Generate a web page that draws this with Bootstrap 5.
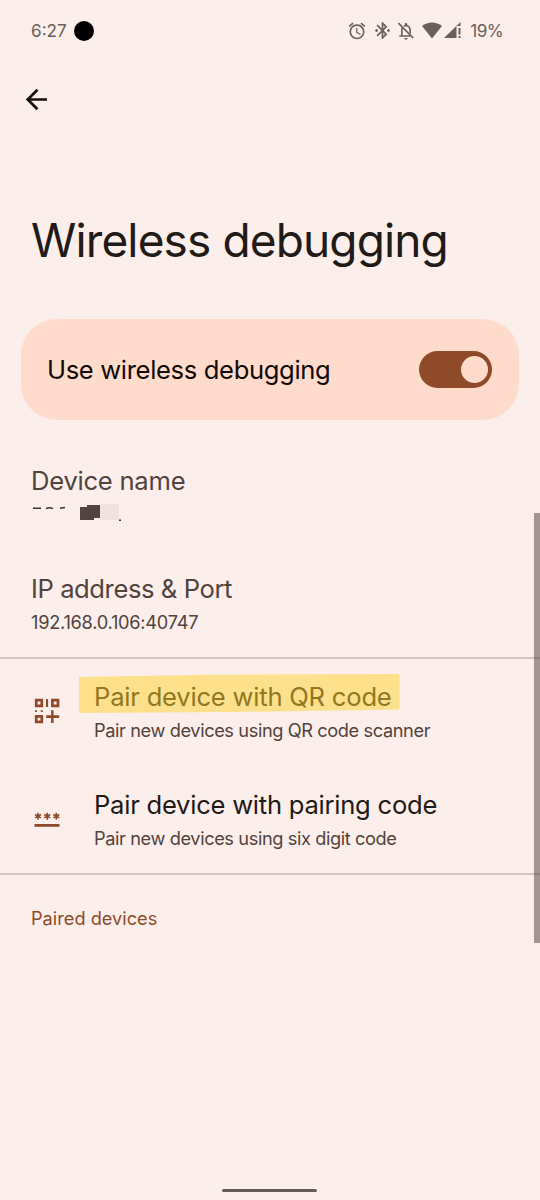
<!DOCTYPE html>
<html lang="en">
<head>
<meta charset="utf-8">
<meta name="viewport" content="width=device-width, initial-scale=1">
<title>Wireless debugging</title>
<link rel="stylesheet" href="https://cdn.jsdelivr.net/npm/bootstrap@5.3.0/dist/css/bootstrap.min.css">
<style>
body{background:#fceeea;font-family:Inter,Roboto,sans-serif;color:#211a17}
.screen{width:540px;height:1200px}
svg{display:block;flex:none}
.status{height:62px;padding:0 37px 0 31px;color:#6a605c;font-size:17.2px}
.cam{width:20px;height:20px;background:#000;margin-left:7px}
.topbar{height:75px;padding:25px 0 0 24px}
.page-title{height:182px;padding:70px 0 0 31px;margin:0;font-size:46px;line-height:66px;font-weight:400;letter-spacing:-.87px}
.main-switch{height:101px;margin:0 21px 21px;padding:0 27px 0 26px;border-radius:36px;background:#ffdbcb;color:#120a06}
.main-switch .t{letter-spacing:-.35px}
.toggle{width:73px;height:37px;background:#8f4b29;padding:0 4.5px}
.knob{width:27px;height:27px;background:#ffdbcb}
.pref{height:108px;padding:22px 30px 0 31px}
.ruled{border-top:2px solid #d2c4c0}
.pref.ruled{padding-top:20px}
.t{font-size:25.6px;line-height:36px;white-space:nowrap;letter-spacing:-.25px}
.addr .t{letter-spacing:-.42px}
.s{font-size:18.2px;line-height:28px;margin-top:1px;white-space:nowrap;color:#51433e;letter-spacing:-.39px}
.addr .s{letter-spacing:-.25px}
.muted{color:#51433e}
.ico{width:32px;margin:18px 32px 0 -1px}
.hl{color:#92781f;letter-spacing:-.22px}
.hl svg{position:absolute;left:-15px;top:-5px}
.hl span{position:relative}
.cat{padding:29px 31px;color:#8f4b29;font-size:18.2px;line-height:28px}
.scroll-thumb{right:0;top:513px;width:6px;height:430px;background:rgba(80,66,61,.52)}
.home-bar{width:95px;height:3px;margin:0 auto 8px 222px;background:#655b57}
</style>
</head>
<body>
<div class="screen position-relative overflow-hidden d-flex flex-column">
  <div class="status d-flex align-items-center">
    <span>6:27</span><span class="cam rounded-circle"></span>
    <div class="ms-auto d-flex align-items-center">
      <svg width="20" height="20" viewBox="0 0 24 24" fill="currentColor"><path d="M22 5.7l-4.6-3.9-1.3 1.5 4.6 3.9L22 5.7zM7.9 3.4L6.6 1.9 2 5.7l1.3 1.5 4.6-3.8zM12.5 8H11v6l4.75 2.85.75-1.23-4-2.37V8zM12 4c-5 0-9 4-9 9s4 9 9 9 9-4 9-9-4-9-9-9zm0 16c-3.9 0-7-3.1-7-7s3.1-7 7-7 7 3.1 7 7-3.1 7-7 7z"/></svg>
      <svg style="margin:0 5px 0 7px" width="17" height="17" viewBox="2 2 20 20" fill="currentColor"><path d="M7 12l-2-2-2 2 2 2 2-2zm10.7-4.3L12 2h-1v7.6L6.4 5 5 6.4l5.6 5.6L5 17.6 6.4 19l4.6-4.6V22h1l5.7-5.7L13.4 12l4.3-4.3zM13 5.8l1.9 1.9L13 9.6V5.8zm1.9 10.5L13 18.2v-3.8l1.9 1.9zM19 10l-2 2 2 2 2-2-2-2z"/></svg>
      <svg width="20" height="20" viewBox="0 0 24 24" fill="currentColor"><path d="M12 22.5c1.1 0 2-.9 2-2h-4c0 1.1.9 2 2 2zM16 17H8v-6.5c0-.6.1-1.200.3-1.700L6.8 7.300C6.300 8.300 6 9.600 6 11v6H4v2h13.900l2.100 2.100 1.400-1.400L3.600 1.900 2.200 3.300 16 17zM12 6.500c2.500 0 4 2 4 4.500v2.700l2 2V11c0-3.100-1.600-5.600-4.500-6.300V4c0-.8-.7-1.500-1.500-1.500s-1.500.7-1.500 1.500v.7c-.6.1-1.200.4-1.700.7l1.500 1.500c.5-.3 1.100-.4 1.700-.4z"/></svg>
      <svg style="margin-left:6px" width="20" height="17" viewBox="0 0 20 17" fill="currentColor"><path d="M0 4C5.500-.8 14.500-.8 20 4L10 16.500z"/></svg>
      <svg style="margin:0 8px 0 2px" width="18" height="17" viewBox="0 0 18 17" fill="currentColor"><path d="M0 16L16.500 0v4h-4v12zM14.500 6h2v6.500h-2zM14.500 14h2v2h-2z"/></svg>
      <span style="letter-spacing:-.6px">19%</span>
    </div>
  </div>
  <div class="topbar"><svg width="26" height="24" viewBox="0 0 26 24" fill="none" stroke="#17110f" stroke-width="2.700"><path d="M23 12.500H4M13.500 2.700L3.700 12.500l9.800 9.800"/></svg></div>
  <h1 class="page-title">Wireless debugging</h1>
  <div class="main-switch d-flex align-items-center justify-content-between">
    <span class="t">Use wireless debugging</span>
    <div class="toggle rounded-pill d-flex align-items-center justify-content-end"><span class="knob rounded-circle"></span></div>
  </div>
  <div class="pref muted">
    <div class="t">Device name</div>
    <svg style="margin:4px 0 0 -1px" width="100" height="20" viewBox="30 503 100 20"><path fill="#efe2df" d="M100 504h19v16h-19z"/><path fill="#51433e" d="M80 507h7v-2h13v13h-6v2H80z"/><path fill="none" stroke="#3d312d" stroke-width="1.500" d="M33 508.200h8M46 508.700q3.500-1.800 7 0M60 508.200l5-.7M119 520.300h2"/></svg>
  </div>
  <div class="pref addr muted">
    <div class="t">IP address &amp; Port</div>
    <div class="s">192.168.0.106:40747</div>
  </div>
  <div class="pref ruled d-flex">
    <div class="ico"><svg width="32" height="28" viewBox="30 697 32 28" fill="#8f4b29"><g fill="none" stroke="#8f4b29" stroke-width="2.700"><path d="M36.200 700.200h5.600v5.600h-5.600zM52.400 700.200H58v5.600h-5.600zM36.200 716.300h5.600v5.600h-5.600z"/></g><path d="M46 699h2.100v8H46zM35 710.200h2v1.800h-2zM40.800 710.200h2v1.800h-2zM51.100 710.200h2.500v12.900h-2.500zM46.200 715.300h13v2.600h-13z"/></svg></div>
    <div>
      <div class="t hl position-relative"><svg width="321" height="40" viewBox="0 0 321 40"><path fill="#fde08b" d="M0 3L130 .8 320.500 0v35.500L150 38 0 39z"/></svg><span>Pair device with QR code</span></div>
      <div class="s">Pair new devices using QR code scanner</div>
    </div>
  </div>
  <div class="pref d-flex">
    <div class="ico"><svg width="32" height="28" viewBox="30 805 32 28" fill="none" stroke="#8f4b29"><path stroke-width="2.800" d="M34.500 825.400h25"/><path id="star" stroke-width="1.600" d="M38 812.700v7M35 814.500l6 3.400M41 814.500l-6 3.400"/><use href="#star" x="9.200"/><use href="#star" x="18.300"/></svg></div>
    <div>
      <div class="t">Pair device with pairing code</div>
      <div class="s">Pair new devices using six digit code</div>
    </div>
  </div>
  <div class="cat ruled">Paired devices</div>
  <div class="scroll-thumb position-absolute"></div>
  <div class="home-bar rounded-pill mt-auto"></div>
</div>
</body>
</html>
